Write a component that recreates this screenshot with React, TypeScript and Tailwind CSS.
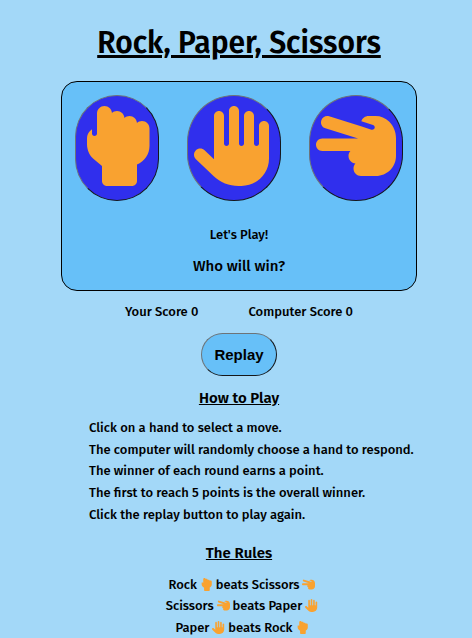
import { FaHand, FaHandBackFist, FaHandScissors } from "react-icons/fa6";

const bevel = "border border-t-[#6d7478] border-r-[#15171a] border-b-[#15171a] border-l-[#6d7478]";

const handButton = "rounded-[50px] bg-[#302fed] px-1.5 pt-2.5 pb-3.5 text-[#f9a230]";

const steps = [
  "Click on a hand to select a move.",
  "The computer will randomly choose a hand to respond.",
  "The winner of each round earns a point.",
  "The first to reach 5 points is the overall winner.",
  "Click the replay button to play again.",
];

const rules = [
  { winner: "Rock", WinnerIcon: FaHandBackFist, loser: "Scissors", LoserIcon: FaHandScissors },
  { winner: "Scissors", WinnerIcon: FaHandScissors, loser: "Paper", LoserIcon: FaHand },
  { winner: "Paper", WinnerIcon: FaHand, loser: "Rock", LoserIcon: FaHandBackFist },
];

export default function App() {
  return (
    <main className="flex h-[638px] w-[472px] flex-col items-center overflow-hidden bg-[#a3d8f8] pl-[6px] font-['Fira_Sans','Noto_Sans',sans-serif] text-[13px] font-medium leading-5 text-black">
      <h1 className="mt-[23px] h-[58px] text-[30px] font-semibold leading-[40px] underline">
        Rock, Paper, Scissors
      </h1>
      <section className="h-[210px] w-[356px] shrink-0 rounded-2xl border border-black bg-[#67c0f8] text-center">
        <div className="mt-[13px] flex justify-center gap-7">
          <button aria-label="Rock" className={`${handButton} ${bevel}`}>
            <FaHandBackFist className="h-20 w-[70px]" />
          </button>
          <button aria-label="Paper" className={`${handButton} ${bevel}`}>
            <FaHand className="size-20" />
          </button>
          <button aria-label="Scissors" className={`${handButton} ${bevel}`}>
            <FaHandScissors className="size-20" />
          </button>
        </div>
        <p className="mt-6">Let's Play!</p>
        <p className="mt-[11px] text-[15px]">Who will win?</p>
      </section>
      <div className="mt-[11px] flex gap-[50px]">
        <p>Your Score 0</p>
        <p>Computer Score 0</p>
      </div>
      <button
        className={`mt-[11px] h-[43px] w-[76px] shrink-0 rounded-[22px] bg-[#67c0f8] pt-px font-['Liberation_Sans',sans-serif] text-[15px] font-bold ${bevel}`}
      >
        Replay
      </button>
      <h2 className="mt-3 text-[15px] font-semibold underline">How to Play</h2>
      <ul className="mt-[9.4px] w-[332px] pl-4 leading-[21.7px] whitespace-nowrap">
        {steps.map((step) => (
          <li key={step}>{step}</li>
        ))}
      </ul>
      <h2 className="mt-[17px] text-[15px] font-semibold underline">The Rules</h2>
      <ul className="mt-[11px] pl-[6px] leading-[21.5px]">
        {rules.map(({ winner, WinnerIcon, loser, LoserIcon }) => (
          <li key={winner} className="flex items-center justify-center gap-[3px] tracking-[-0.05px]">
            {winner}
            <WinnerIcon className="h-[13px] w-auto text-[#f9a230]" />
            beats {loser}
            <LoserIcon className="h-[13px] w-auto text-[#f9a230]" />
          </li>
        ))}
      </ul>
    </main>
  );
}
